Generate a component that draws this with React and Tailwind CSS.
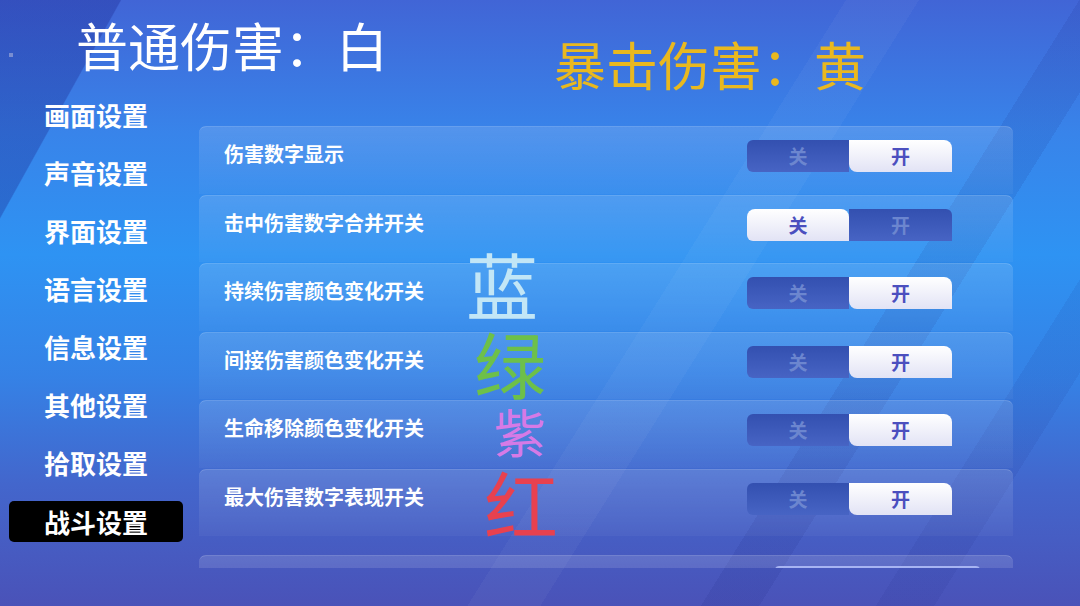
import React from "react";

const menu = ["画面设置", "声音设置", "界面设置", "语言设置", "信息设置", "其他设置", "拾取设置", "战斗设置"];

const options = [
  { label: "伤害数字显示", on: true },
  { label: "击中伤害数字合并开关", on: false },
  { label: "持续伤害颜色变化开关", on: true },
  { label: "间接伤害颜色变化开关", on: true },
  { label: "生命移除颜色变化开关", on: true },
  { label: "最大伤害数字表现开关", on: true },
];

const Switch = ({ on }) => (
  <div className="flex w-[205px] h-[32px] text-[19px] font-bold leading-[32px] text-center">
    {on ? (
      <>
        <div className="w-[102px] rounded-l-[6px] bg-[linear-gradient(180deg,#3350b0,#4764c4)] text-[#6c86cf]">关</div>
        <div className="w-[103px] rounded-tr-[8px] rounded-bl-[8px] bg-[linear-gradient(180deg,#ffffff,#e2e3f5)] text-[#4b4fbf]">开</div>
      </>
    ) : (
      <>
        <div className="w-[102px] rounded-tl-[8px] rounded-tr-[8px] rounded-bl-[6px] bg-[linear-gradient(180deg,#ffffff,#e2e3f5)] text-[#4b4fbf]">关</div>
        <div className="w-[103px] rounded-tr-[6px] bg-[linear-gradient(180deg,#3350b0,#4764c4)] text-[#6c86cf]">开</div>
      </>
    )}
  </div>
);

const OptionRow = ({ label, on }) => (
  <div className="flex shrink-0 items-start h-[67.5px] pt-[13px] pl-[25px] pr-[61px] rounded-t-[7px] border-t border-white/20 bg-[linear-gradient(180deg,rgba(255,255,255,0.14),rgba(255,255,255,0.04))]">
    <p className="flex-1 text-[20px] font-bold leading-[28px] text-white">{label}</p>
    <Switch on={on} />
  </div>
);

export default function App() {
  return (
    <div className="relative w-[1080px] h-[606px] overflow-hidden font-['Noto_Sans_CJK_SC','Noto_Sans',sans-serif] bg-[linear-gradient(119deg,rgba(25,35,140,0.32)_0%,rgba(25,35,140,0.32)_8.5%,transparent_8.6%),linear-gradient(122deg,transparent_58%,rgba(255,255,255,0.035)_58%,rgba(255,255,255,0.035)_63%,transparent_63%),linear-gradient(122deg,transparent_74%,rgba(20,30,120,0.1)_74%,rgba(20,30,120,0.1)_78%,transparent_78%),linear-gradient(122deg,transparent_86%,rgba(20,30,120,0.08)_86%,rgba(20,30,120,0.08)_90%,transparent_90%),linear-gradient(180deg,#4165d6_0%,#3884ea_22%,#2e93f3_42%,#3582e6_62%,#4366cc_80%,#4a52b8_100%)]">
      <div className="absolute left-[9px] top-[53px] w-[4px] h-[4px] bg-[#8b9bd4]/80" />

      {/* header captions */}
      <div className="flex items-start h-[86px] text-[52px] leading-none">
        <h1 className="ml-[76px] mt-[19px] text-white">普通伤害：白</h1>
        <h2 className="ml-[166px] mt-[38px] text-[#e9b81f]">暴击伤害：黄</h2>
      </div>

      <div className="flex">
        <nav className="flex flex-col w-[174px] ml-[9px]">
          {menu.map((name, i) =>
            i === menu.length - 1 ? (
              <div key={name} className="flex items-center h-[58px]">
                <div className="w-full h-[41px] pl-[35px] rounded-[5px] bg-black text-[26px] font-bold leading-[41px] text-white">{name}</div>
              </div>
            ) : (
              <div key={name} className="h-[58px] pl-[35px] text-[26px] font-bold leading-[58px] text-white">{name}</div>
            )
          )}
        </nav>

        <section className="flex flex-col gap-[1px] w-[814px] h-[442px] mt-[40px] ml-[16px] overflow-hidden">
          {options.map((o) => (
            <OptionRow key={o.label} label={o.label} on={o.on} />
          ))}
          <div className="flex shrink-0 h-[68px] mt-[18px] rounded-t-[7px] border-t border-white/20 bg-[linear-gradient(180deg,rgba(255,255,255,0.14),rgba(255,255,255,0.04))]">
            <div className="ml-auto mr-[33px] mt-[10px] w-[205px] h-[30px] rounded-t-[4px] border-t-2 border-[#a7b4f2]" />
          </div>
        </section>
      </div>

      {/* colour legend over the list */}
      <span className="absolute left-[466px] top-[247px] text-[72px] leading-none text-[#c2e6f6]">蓝</span>
      <span className="absolute left-[474px] top-[326px] text-[72px] leading-none text-[#6dc04a]">绿</span>
      <span className="absolute left-[494px] top-[405px] text-[52px] leading-none text-[#d67ae6]">紫</span>
      <span className="absolute left-[484px] top-[465px] text-[74px] leading-none text-[#e8414f]">红</span>
    </div>
  );
}
